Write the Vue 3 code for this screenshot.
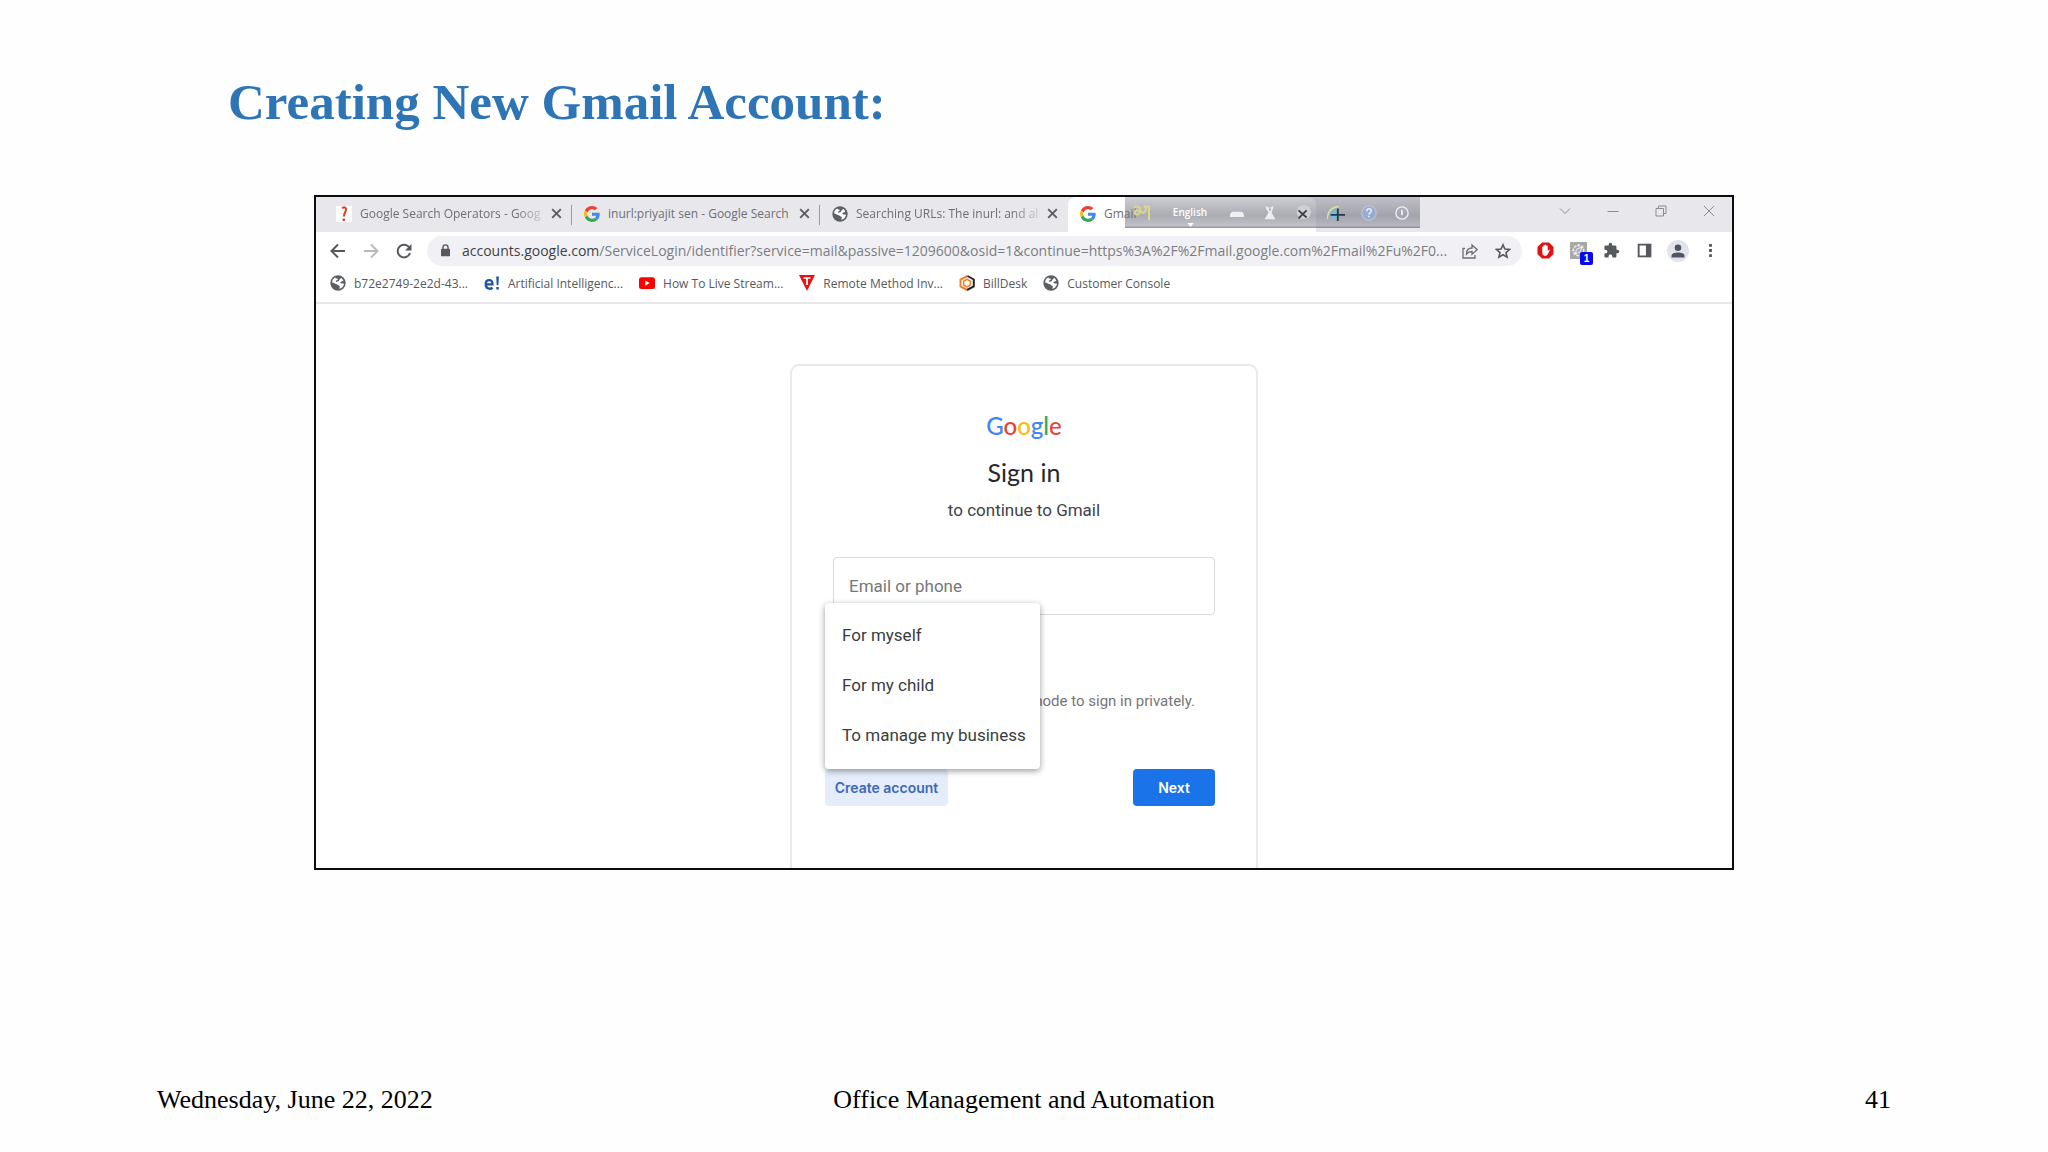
<script setup>
const tabs = [
  { icon: 'question', title: 'Google Search Operators - Goog', fade: true },
  { icon: 'google', title: 'inurl:priyajit sen - Google Search', fade: false },
  { icon: 'globe', title: 'Searching URLs: The inurl: and al', fade: true },
]
const bookmarks = [
  { icon: 'globe', label: 'b72e2749-2e2d-43...' },
  { icon: 'edu', label: 'Artificial Intelligenc...' },
  { icon: 'youtube', label: 'How To Live Stream...' },
  { icon: 'tri', label: 'Remote Method Inv...' },
  { icon: 'bill', label: 'BillDesk' },
  { icon: 'globe', label: 'Customer Console' },
]
const accountTypes = ['For myself', 'For my child', 'To manage my business']
const logo = [
  ['G', 'blue'], ['o', 'red'], ['o', 'yellow'], ['g', 'blue'], ['l', 'green'], ['e', 'red'],
]
</script>

<template>
  <svg class="defs" aria-hidden="true">
    <symbol id="google" viewBox="0 0 48 48">
      <path fill="#ea4335" d="M24 9.500c3.500 0 6.700 1.200 9.200 3.600l6.900-6.900C35.900 2.400 30.500 0 24 0 14.600 0 6.500 5.400 2.600 13.200l8 6.200C12.400 13.700 17.700 9.500 24 9.500z" />
      <path fill="#4285f4" d="M47 24.600c0-1.600-.2-3.100-.4-4.600H24v9h12.900c-.6 3-2.200 5.500-4.700 7.200l7.700 6C44.400 38 47 32.100 47 24.600z" />
      <path fill="#fbbc05" d="M10.500 28.600c-.5-1.500-.8-3-.8-4.600s.3-3.100.8-4.600l-8-6.200C.9 16.500 0 20.100 0 24s.9 7.500 2.600 10.800l7.900-6.200z" />
      <path fill="#34a853" d="M24 48c6.500 0 11.900-2.100 15.900-5.800l-7.700-6c-2.200 1.500-4.900 2.300-8.200 2.300-6.300 0-11.600-4.200-13.500-9.900l-8 6.200C6.500 42.600 14.600 48 24 48z" />
    </symbol>
    <symbol id="globe" viewBox="0 0 24 24">
      <circle cx="12" cy="12" r="11.500" fill="#5b5e63" />
      <path fill="#fff" d="M20 8.500c-2 1.800-3.500.6-4.300 2-.8 1.500 1.500 2.500 3.300 2.300 1 0 1.800.2 2 .8-.7 3.700-3.500 6.500-7 7.200-.6-1.200 1.200-2.400.7-3.900-.5-1.300-2.700-.7-3.400-2.200-.8-1.500-3.300-1.200-4.800-2.500-1.200-1-2-1.200-3.400-1 0-3.700 2.200-6.600 5.200-8-.3 1.700.8 2.300 2.300 2.200 1.600-.2 1.300 1.200.4 2-1 .9-2.600.8-2.400 2 .2 1 2 .6 3.300.4 1.800-.3 1.200-2.300 2.400-3.200 1-.8 2.300-.5 2-2.300 1.600.8 3 2.400 3.700 4.200z" />
    </symbol>
    <symbol id="question" viewBox="0 0 16 16">
      <path fill="#fff" d="M0 0h16v16H0z" />
      <path d="M6.300 2.500C7.300.6 10.600 1 9.900 4.200c-.4 2-2 3-1.900 6.300" fill="none" stroke="#e8391d" stroke-width="2" />
      <circle cx="7.800" cy="13.800" r="1.400" fill="#e8391d" />
    </symbol>
    <symbol id="edu" viewBox="0 0 16 16">
      <path d="M2 9.300h6.500C8.700 3.500 1.700 3.800 1.700 9.200c0 5 5 5.300 6.800 3.400" fill="none" stroke="#1f56a0" stroke-width="2.300" />
      <path d="M12.200 1.500h2.700l-.5 8.700h-1.700zM12.300 12h2.500v2.500h-2.500z" fill="#1f56a0" />
    </symbol>
    <symbol id="youtube" viewBox="0 0 16 16">
      <rect y="2.300" width="16" height="11.600" rx="2.500" fill="#f00" />
      <path d="M6.300 5.500v5.200l4.400-2.600z" fill="#fff" />
    </symbol>
    <symbol id="tri" viewBox="0 0 16 16">
      <path d="M0 0h16L8 16z" fill="#ec1111" />
      <path d="M4.500 2.300h7v1.500H8.900V10H7.100V3.800H4.500z" fill="#fff" />
    </symbol>
    <symbol id="bill" viewBox="0 0 16 16">
      <path d="M8.500 1L1.500 4.500v7L8 15" fill="none" stroke="#f08030" stroke-width="2" />
      <path d="M8.500 1L14.800 4.500v7L8 15" fill="none" stroke="#26201f" stroke-width="2" />
      <path d="M8 4.300l3.400 1.900v3.800L8 11.900 4.600 10V6.200z" fill="#fff" stroke="#f08030" stroke-width="1.600" />
    </symbol>
    <symbol id="close" viewBox="0 0 12 12">
      <path d="M2 2l8 8M10 2l-8 8" fill="none" stroke="#5b5e63" stroke-width="1.800" />
    </symbol>
  </svg>

  <main class="slide">
    <h1 class="title">Creating New Gmail Account:</h1>

    <section class="browser">
      <div class="strip">
        <div v-for="tab in tabs" :key="tab.title" class="tab">
          <svg class="fav"><use :href="'#' + tab.icon" /></svg>
          <span class="tab-title" :class="{ fade: tab.fade }">{{ tab.title }}</span>
          <button class="plain" aria-label="Close tab"><svg class="x"><use href="#close" /></svg></button>
        </div>
        <div class="tab active">
          <svg class="fav"><use href="#google" /></svg>
          <span class="tab-title">Gmail</span>
          <div class="ime">
            <svg class="ime-lang" viewBox="0 0 20 20"><path d="M2 5c3-3 7-1 6 3-1 5-6 4-5 1s6-1 8 1c2-.5 3-2 3-6M12 3.500h6M17 3v14" fill="none" stroke="#dcd68e" stroke-width="2" /></svg>
            <div class="ime-name">English<svg class="caret" viewBox="0 0 8 5"><path d="M0 0h8L4 5z" fill="#fff" /></svg></div>
            <svg class="ime-icon" viewBox="0 0 20 20"><path d="M2 14.500c0-3 1-6 4-6h8c3 0 4 3 4 6z" fill="#f0f0f2" /></svg>
            <svg class="ime-icon" viewBox="0 0 20 20"><path d="M5 2l3 2h3l3-2-1 4-1 2v2l4 7H4l4-7V8L6 6z" fill="#eeeef0" /><circle cx="10" cy="6" r="1.200" fill="#a6a7ad" /></svg>
            <svg class="ime-icon" viewBox="0 0 20 20"><circle cx="11" cy="9" r="8" fill="#cfd0d5" /><path d="M5 7l9 8M14 7l-9 9" stroke="#3c3f44" stroke-width="2" /></svg>
            <svg class="ime-icon" viewBox="0 0 20 20"><circle cx="9" cy="11" r="6" fill="#7fb9da" /><path d="M0 17C1 8 6 3 13 3" fill="none" stroke="#e4dc98" stroke-width="2" /><path d="M4 12h16M12 5v14" stroke="#263846" stroke-width="2" /></svg>
            <svg class="ime-icon" viewBox="0 0 20 20"><circle cx="10" cy="10" r="8" fill="#99abd0" stroke="#b4c1dc" stroke-width="1.500" /><path d="M7.500 8c0-3.500 5-3.500 5-.5 0 2-2.500 2-2.500 4.200M10 13v1.800" fill="none" stroke="#e8edf8" stroke-width="1.800" /></svg>
            <svg class="ime-icon" viewBox="0 0 20 20"><circle cx="10" cy="10" r="6.800" fill="none" stroke="#f0f0f2" stroke-width="1.500" /><path d="M10 6.500v6" stroke="#f0f0f2" stroke-width="2" /></svg>
          </div>
        </div>
        <div class="window-buttons">
          <button class="plain" aria-label="Search tabs"><svg viewBox="0 0 12 12"><path d="M1 3.500l5 5 5-5" /></svg></button>
          <button class="plain" aria-label="Minimize"><svg viewBox="0 0 12 12"><path d="M.5 6.500h11" /></svg></button>
          <button class="plain" aria-label="Restore"><svg viewBox="0 0 12 12"><path d="M1 3.500h7.500V11H1zM3.500 3.500V1H11v7.500H8.500" /></svg></button>
          <button class="plain" aria-label="Close"><svg viewBox="0 0 12 12"><path d="M1 1l10 10M11 1L1 11" /></svg></button>
        </div>
      </div>

      <div class="toolbar">
        <div class="nav">
          <button class="plain" aria-label="Back"><svg viewBox="0 0 16 16"><path d="M15 8H2M8 1.500L1.500 8 8 14.500" fill="none" stroke="#55585d" stroke-width="2" /></svg></button>
          <button class="plain" aria-label="Forward"><svg viewBox="0 0 16 16"><path d="M1 8h13M8 1.500L14.500 8 8 14.500" fill="none" stroke="#b9babd" stroke-width="2" /></svg></button>
          <button class="plain" aria-label="Reload"><svg viewBox="0 0 16 16"><path d="M13.500 5A6.300 6.300 0 1 0 14 10" fill="none" stroke="#55585d" stroke-width="2" /><path d="M15.500 1v6.500H9z" fill="#55585d" /></svg></button>
        </div>
        <div class="address">
          <svg class="lock" viewBox="0 0 10 14"><rect y="5" width="10" height="8.500" rx="1" fill="#55585d" /><path d="M2.200 6V3.500a2.800 2.800 0 0 1 5.600 0V6" fill="none" stroke="#55585d" stroke-width="1.500" /></svg>
          <div class="url" role="textbox" aria-label="Address"><b>accounts.google.com</b>/ServiceLogin/identifier?service=mail&amp;passive=1209600&amp;osid=1&amp;continue=https%3A%2F%2Fmail.google.com%2Fmail%2Fu%2F0...</div>
          <button class="plain" aria-label="Share"><svg viewBox="0 0 16 16"><path d="M3 5.500H1V15h12v-3M4.500 11c0-4 2-6 5.500-6V2l5.200 4.700L10 11.300V8.500c-2.500 0-4 .5-5.500 2.500z" fill="none" stroke="#6b6e73" stroke-width="1.300" /></svg></button>
          <button class="plain" aria-label="Bookmark"><svg viewBox="0 0 16 16"><path d="M8 1.800l1.900 4.300 4.600.4-3.500 3.100 1.100 4.600L8 11.800l-4.100 2.400L5 9.600 1.500 6.500l4.600-.4z" fill="none" stroke="#55585d" stroke-width="1.600" /></svg></button>
        </div>
        <div class="extensions">
          <button class="plain" aria-label="Ad blocker"><svg viewBox="0 0 18 18"><path d="M5.300.5h7.400l4.800 4.800v7.400l-4.800 4.800H5.300L.5 12.700V5.300z" fill="#dd1414" /><path d="M5.500 9V5.500a.7.7 0 0 1 1.400 0V4a.7.7 0 0 1 1.500 0V3.500a.7.7 0 0 1 1.500 0V4.500a.7.7 0 0 1 1.500 0V10l1-1.500c.8-.6 1.300 0 .9.700L11 13.500c-1 1.500-4.300 1.500-5.100-.5z" fill="#fff" /></svg></button>
          <button class="plain badge-host" aria-label="Extension">
            <svg viewBox="0 0 18 18"><rect width="18" height="18" fill="#a8a8a8" /><circle cx="9" cy="9" r="5.500" fill="none" stroke="#e8e8e8" stroke-width="1.600" stroke-dasharray="3 1" /><path d="M5 13l2.500-5.500L13 5l-2.500 5.500zM9 2v3M2 9h3" fill="none" stroke="#ededed" stroke-width="1.200" /></svg>
            <span class="badge">1</span>
          </button>
          <button class="plain" aria-label="Extensions"><svg viewBox="0 0 24 24"><path d="M20.500 11H19V7c0-1.100-.9-2-2-2h-4V3.500a2.500 2.500 0 0 0-5 0V5H4c-1.100 0-2 .9-2 2v3.800h1.500a2.700 2.700 0 0 1 0 5.400H2V20c0 1.100.9 2 2 2h3.800v-1.500a2.700 2.700 0 0 1 5.400 0V22H17c1.100 0 2-.9 2-2v-4h1.500a2.500 2.500 0 0 0 0-5z" fill="#55585d" /></svg></button>
          <button class="plain" aria-label="Side panel"><svg viewBox="0 0 18 18"><path d="M2.800 2.800h12.400v12.400H2.800z" fill="none" stroke="#55585d" stroke-width="2" /><path d="M10.500 2h5.500v14h-5.500z" fill="#55585d" /></svg></button>
          <button class="plain" aria-label="Profile"><svg class="avatar" viewBox="0 0 22 22"><circle cx="11" cy="11" r="11" fill="#e3e4e9" /><circle cx="11" cy="7.800" r="3.300" fill="#4d5563" /><path d="M4.500 17.500v-1.700c0-4.300 13-4.300 13 0v1.700z" fill="#4d5563" /></svg></button>
          <button class="plain" aria-label="Menu"><svg viewBox="0 0 18 18"><path d="M7.500 2h3v3h-3zM7.500 7.500h3v3h-3zM7.500 13h3v3h-3z" fill="#55585d" /></svg></button>
        </div>
      </div>

      <nav class="bookmarks">
        <a v-for="mark in bookmarks" :key="mark.label" href="#" class="bookmark">
          <svg class="fav"><use :href="'#' + mark.icon" /></svg>{{ mark.label }}
        </a>
      </nav>

      <div class="viewport">
        <form class="card" @submit.prevent>
          <div class="logo"><span v-for="(part, i) in logo" :key="i" :class="part[1]">{{ part[0] }}</span></div>
          <h2 class="heading">Sign in</h2>
          <p class="sub">to continue to Gmail</p>
          <input class="email" type="text" placeholder="Email or phone" aria-label="Email or phone" />
          <p class="hint">mode to sign in privately.</p>
          <div class="actions">
            <div class="create">
              <button type="button" class="create-button">Create account</button>
              <ul class="menu">
                <li v-for="type in accountTypes" :key="type"><button type="button" class="menu-item">{{ type }}</button></li>
              </ul>
            </div>
            <button type="submit" class="next">Next</button>
          </div>
        </form>
      </div>
    </section>

    <footer class="footer">
      <span>Wednesday, June 22, 2022</span>
      <span class="mid">Office Management and Automation</span>
      <span class="end">41</span>
    </footer>
  </main>
</template>

<style>
body { margin: 0; background: #fefefe; }
</style>

<style scoped>
* { box-sizing: border-box; }
.defs { position: absolute; width: 0; height: 0; }
.slide { min-height: 100vh; display: flex; flex-direction: column; background: #fefefe; font-family: "Liberation Serif", serif; }
.title { margin: 0; padding: 72px 228px 63px; font-size: 51px; line-height: 60px; font-weight: 700; color: #2e75b6; }
.browser { margin: 0 314px; border: 2px solid #0c0c0e; background: #fff; font-family: "Open Sans", "Noto Sans", sans-serif; overflow: hidden; }
.plain { display: flex; align-items: center; justify-content: center; padding: 0; border: 0; background: none; }

.strip { display: flex; height: 35px; padding-left: 8px; background: #e8e8ec; }
.tab { position: relative; display: flex; align-items: center; width: 248px; padding: 0 9px 2px 12px; font-size: 12px; color: #6d6f74; }
.tab::after { content: ""; position: absolute; right: 0; top: 8px; width: 1px; height: 20px; background: #9a9ba0; }
.tab:nth-child(3)::after, .active::after { display: none; }
.fav { flex: none; width: 16px; height: 16px; }
.tab-title { flex: 1; margin-left: 8px; white-space: nowrap; }
.fade { mask-image: linear-gradient(to right, #000 155px, transparent 190px); }
.x { width: 13px; height: 13px; }
.active { background: #fff; border-radius: 8px 8px 0 0; }
.ime { position: absolute; left: 57px; top: 0; display: flex; align-items: center; width: 295px; height: 31px; color: #fff; background: linear-gradient(rgba(130, 132, 144, .4), rgba(115, 117, 128, .6) 60%, rgba(130, 132, 144, .5) 92%, rgba(95, 98, 110, .7)); }
.ime-lang { width: 20px; height: 20px; margin: 0 7px; }
.ime-name { display: flex; flex-direction: column; align-items: center; width: 62px; padding-top: 6px; font-size: 10px; line-height: 14px; font-weight: 600; }
.caret { width: 7px; height: 4px; margin-top: 4px; }
.ime-icon { width: 18px; height: 18px; margin: 0 8px 0 7px; }
.window-buttons { display: flex; margin: 0 -1px 7px auto; }
.window-buttons .plain { width: 48px; }
.window-buttons svg { width: 12px; height: 12px; fill: none; stroke: #8b8c90; stroke-width: 1; }

.toolbar { display: flex; align-items: center; height: 37px; padding: 0 5px 0 5px; }
.toolbar .plain { width: 33px; height: 30px; }
.nav, .extensions { display: flex; }
.nav svg { width: 16px; height: 16px; }
.address { flex: 1; min-width: 0; display: flex; align-items: center; height: 30px; margin: 0 7px; padding: 0 3px 0 14px; border-radius: 15px; background: #f1f1f5; }
.lock { width: 9px; height: 13px; }
.url { flex: 1; min-width: 0; margin-left: 12px; white-space: nowrap; font-size: 14px; color: #7b7d82; }
.url b { font-weight: 400; color: #3f4146; }
.address svg:not(.lock) { width: 16px; height: 16px; }
.extensions svg { width: 17px; height: 17px; }
.extensions .avatar { width: 22px; height: 22px; }
.badge-host { position: relative; }
.badge { position: absolute; left: 18px; top: 16px; width: 13px; height: 13px; border-radius: 2px; background: #0909ee; color: #fff; font-size: 10px; line-height: 13px; font-weight: 700; }

.bookmarks { display: flex; gap: 16px; height: 35px; padding: 0 14px 5px; border-bottom: 2px solid #e7e7e9; align-items: center; }
.bookmark { display: flex; align-items: center; gap: 8px; font-size: 12px; color: #57595e; text-decoration: none; white-space: nowrap; }

.viewport { padding-top: 60px; font-family: Roboto, sans-serif; }
.card { width: 468px; margin: 0 auto; padding: 40px 41px 62px; border: 2px solid #e9e9ec; border-bottom: 0; border-radius: 9px 9px 0 0; display: flex; flex-direction: column; }
.logo { text-align: center; font: 500 24px/40px Lato, sans-serif; }
.blue { color: #4285f4; }
.red { color: #ea4335; }
.yellow { color: #fbbc05; }
.green { color: #34a853; }
.heading { margin: 6px 0 0; text-align: center; font: 400 25px/40px Lato, sans-serif; color: #27282b; }
.sub { margin: 6px 0 35px; text-align: center; font-size: 17px; line-height: 24px; color: #414246; }
.email { width: 100%; height: 58px; padding: 0 15px; border: 1px solid #d9d9de; border-radius: 4px; background: #fff; font: 17px Roboto, sans-serif; }
.email::placeholder { color: #76777b; }
.hint { margin: 74px 20px 56px 0; text-align: right; font-size: 15px; line-height: 24px; color: #75767a; }
.actions { display: flex; justify-content: space-between; margin-left: -8px; }
.create { position: relative; }
.create-button, .next { height: 37px; border: 0; border-radius: 4px; font: 600 14px Inter, sans-serif; }
.create-button { width: 123px; padding: 0 0 1px; background: #e5edfb; color: #3c68b8; }
.next { width: 82px; padding: 0 0 1px; background: #1a73e8; color: #fff; }
.menu { position: absolute; left: 0; bottom: 100%; width: 215px; margin: 0; padding: 7px 0 9px; list-style: none; border-radius: 4px; background: #fff; box-shadow: 0 2px 6px rgba(0, 0, 0, .4); }
.menu-item { width: 100%; height: 50px; padding: 0 17px; border: 0; background: none; text-align: left; white-space: nowrap; font: 17px Roboto, sans-serif; color: #3b3c40; }

.footer { display: grid; grid-template-columns: 1fr auto 1fr; margin-top: auto; padding: 0 157px 37px; font-size: 26px; line-height: 30px; color: #000; }
.end { text-align: right; }
</style>
